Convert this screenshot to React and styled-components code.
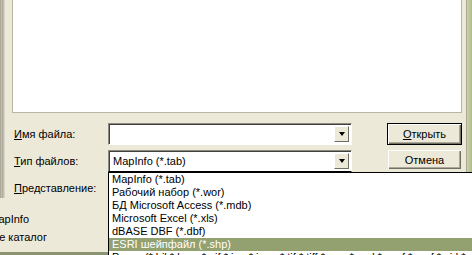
import React from 'react';
import styled, {createGlobalStyle} from 'styled-components';

const Global = createGlobalStyle`
  html, body {
    margin: 0;
    padding: 0;
    background: #ece9d8;
  }
  body {
    font-family: "Liberation Sans", Arial, sans-serif;
    font-size: 11px;
    color: #000;
  }
`;

const fileTypes = [
    'MapInfo (*.tab)',
    'Рабочий набор (*.wor)',
    'БД Microsoft Access (*.mdb)',
    'Microsoft Excel (*.xls)',
    'dBASE DBF (*.dbf)',
    'ESRI шейпфайл (*.shp)',
    'Растр (*.bil;*.bmp;*.gif;*.jpg;*.jpeg;*.tif;*.tiff;*.png;*.psd;*.wmf;*.emf;*.sid;*.ecw)'
];

const Frame = styled.div`
  position: relative;
  width: 472px;
  height: 255px;
  overflow: hidden;
  display: flex;
  background: #ece9d8;
`;

const Content = styled.div`
  width: 466px;
  display: flex;
  flex-direction: column;
`;

const Upper = styled.div`
  display: flex;
`;

const Strip = styled.div`
  width: 4px;
  height: 198px;
  background: repeating-linear-gradient(90deg, #aca899 0 1px, #c4c1b2 1px 2px);
  border-right: 1px solid #d6d3c4;
`;

const Body = styled.div`
  flex: 1;
  padding-left: 7px;
  display: flex;
  flex-direction: column;
`;

const FileList = styled.div`
  width: 448px;
  height: 112px;
  background: #fff;
  border: 1px solid #b9b6a6;
  border-top: none;
`;

const Form = styled.div`
  display: grid;
  grid-template-columns: 96px 244px 35px 75px;
  grid-template-rows: 22px 22px 22px;
  row-gap: 5px;
  margin-top: 10px;
`;

const Label = styled.div`
  grid-column: 1;
  display: flex;
  align-items: center;
  padding-left: 2px;
  white-space: nowrap;
  u {
    text-decoration: underline;
  }
`;

const Combo = styled.div`
  grid-column: 2;
  display: flex;
  align-items: center;
  background: #fff;
  border-top: 1px solid #8e8b7e;
  border-left: 1px solid #8e8b7e;
  border-right: 1px solid #fff;
  border-bottom: 1px solid ${p => (p.open ? '#000' : '#fff')};
  box-shadow: inset 1px 1px 0 #404040;
  padding: 0 2px 0 4px;
`;

const ComboText = styled.span`
  flex: 1;
  white-space: nowrap;
`;

const DropButton = styled.div`
  width: 15px;
  height: 16px;
  background: #ece9d8;
  border-top: 1px solid #fff;
  border-left: 1px solid #fff;
  border-right: 1px solid #716f64;
  border-bottom: 1px solid #716f64;
  display: flex;
  align-items: center;
  justify-content: center;
  box-sizing: border-box;
  &::after {
    content: '';
    border-left: 3.5px solid transparent;
    border-right: 3.5px solid transparent;
    border-top: 4px solid #000;
  }
`;

const Button = styled.div`
  grid-column: 4;
  display: flex;
  align-items: center;
  justify-content: center;
  background: #ece9d8;
  border: 1px solid ${p => (p.primary ? '#000' : 'transparent')};
  box-shadow: inset 1px 1px 0 #fff, inset -1px -1px 0 #716f64, inset -2px -2px 0 #aca899;
  height: ${p => (p.primary ? '22px' : '21px')};
  margin-top: ${p => (p.primary ? '0' : '-1px')};
  box-sizing: border-box;
  u {
    text-decoration: underline;
  }
`;

const Lower = styled.div`
  flex: 1;
  display: flex;
  flex-direction: column;
  padding-top: 11px;
  overflow: hidden;
`;

/* text of the window behind, cut by the left edge of the screenshot */
const Behind = styled.div`
  width: ${p => p.visible}px;
  height: 18px;
  line-height: 18px;
  display: flex;
  justify-content: flex-end;
  overflow: hidden;
  white-space: nowrap;
`;

const Band = styled.div`
  margin-top: auto;
  height: 3px;
  background: #8a9470;
`;

const RightEdge = styled.div`
  width: 6px;
  display: flex;
  &::before {
    content: '';
    width: 1px;
    background: #aca899;
  }
  &::after {
    content: '';
    flex: 1;
    background: linear-gradient(90deg, #c9d4a8, #aebd86);
  }
`;

const DropList = styled.div`
  position: absolute;
  left: 108px;
  top: 172px;
  width: 372px;
  height: 100px;
  background: #fff;
  border: 1px solid #000;
`;

const Item = styled.div`
  height: 13px;
  line-height: 13px;
  padding-left: 3px;
  white-space: nowrap;
  background: ${p => (p.selected ? '#93a070' : 'transparent')};
  color: ${p => (p.selected ? '#fff' : '#000')};
`;

export default function App() {
    return (
        <Frame>
            <Global/>
            <Content>
                <Upper>
                    <Strip/>
                    <Body>
                        <FileList/>
                        <Form>
                            <Label><span><u>И</u>мя файла:</span></Label>
                            <Combo>
                                <ComboText/>
                                <DropButton/>
                            </Combo>
                            <Button primary><span><u>О</u>ткрыть</span></Button>

                            <Label><span><u>Т</u>ип файлов:</span></Label>
                            <Combo open>
                                <ComboText>MapInfo (*.tab)</ComboText>
                                <DropButton/>
                            </Combo>
                            <Button>Отмена</Button>

                            <Label><span><u>П</u>редставление:</span></Label>
                        </Form>
                    </Body>
                </Upper>
                <Lower>
                    <Behind visible={29}><span>Таблица MapInfo</span></Behind>
                    <Behind visible={47}><span>Текущие каталог</span></Behind>
                    <Band/>
                </Lower>
            </Content>
            <RightEdge/>
            <DropList>
                {fileTypes.map((t, i) => (
                    <Item key={t} selected={i === 5}>{t}</Item>
                ))}
            </DropList>
        </Frame>
    );
}
